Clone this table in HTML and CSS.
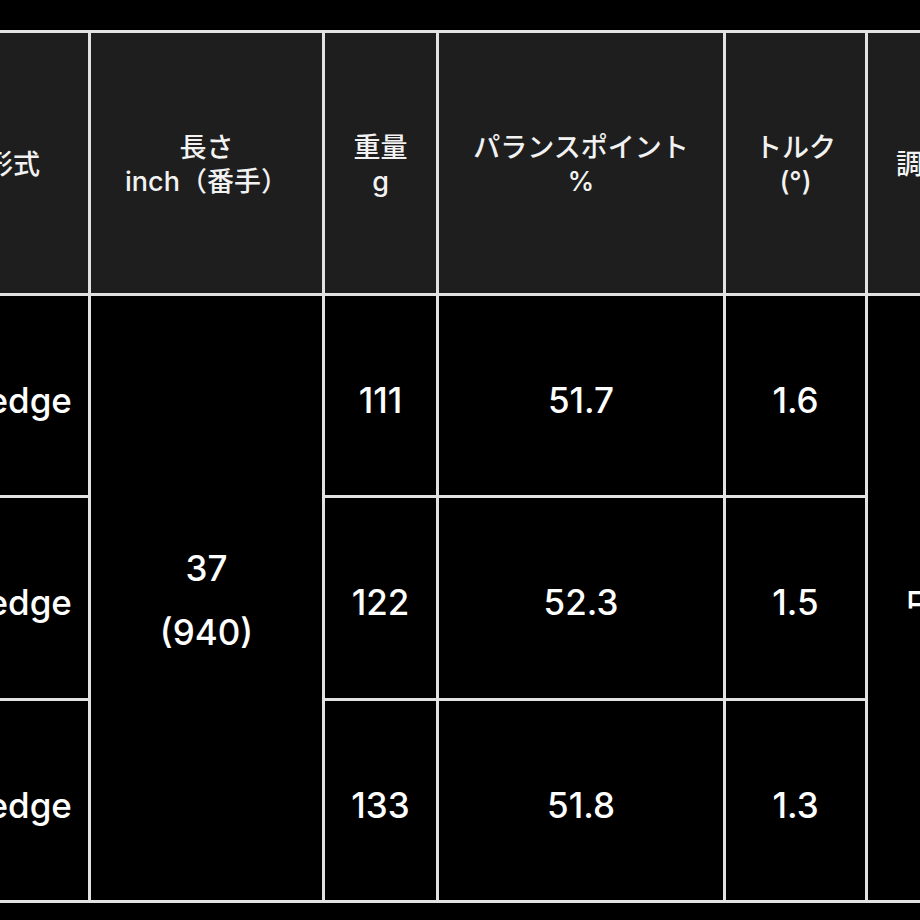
FILE: index.html
```html
<!DOCTYPE html>
<html lang="ja">
<head>
<meta charset="utf-8">
<link rel="stylesheet" href="styles.css">
</head>
<body>
<div class="page">
  <div class="spec">
    <div class="cell head">形式</div>
    <div class="cell head two">長さ<br>inch（番手）</div>
    <div class="cell head two">重量<br>g</div>
    <div class="cell head two">パランスポイント<br>%</div>
    <div class="cell head two">トルク<br>(°)</div>
    <div class="cell head">調子</div>

    <div class="cell">Wedge</div>
    <div class="cell span3 tall">37<br>(940)</div>
    <div class="cell">111</div>
    <div class="cell">51.7</div>
    <div class="cell">1.6</div>
    <div class="cell span3">中</div>

    <div class="cell">Wedge</div>
    <div class="cell">122</div>
    <div class="cell">52.3</div>
    <div class="cell">1.5</div>

    <div class="cell">Wedge</div>
    <div class="cell">133</div>
    <div class="cell">51.8</div>
    <div class="cell">1.3</div>
  </div>
</div>
</body>
</html>
```

FILE: styles.css
```css
html, body {
  margin: 0;
  padding: 0;
  background: #000;
  overflow: hidden;
}

.page {
  padding-top: 30px;
}

.spec {
  display: grid;
  width: max-content;
  margin-left: -65px;
  grid-template-columns: 150px 231px 111px 284px 139px 110px;
  grid-template-rows: 260px 199px 200px 199px;
  gap: 3px;
  padding: 3px;
  background: #e2e2e2;
  font-family: Inter, "Liberation Sans", "Noto Sans CJK JP", sans-serif;
  color: #fff;
}

.cell {
  display: flex;
  align-items: center;
  justify-content: center;
  text-align: center;
  background: #000;
  font-size: 35px;
  font-weight: 500;
  line-height: 42px;
  padding-top: 8px;
  box-sizing: border-box;
}

.head {
  background: #1e1e1e;
  font-size: 27px;
  line-height: 34px;
  padding-top: 4px;
  color: #f2f2f2;
}

.span3 {
  grid-row: span 3;
}

.tall {
  line-height: 64px;
  padding-top: 4px;
}
```
